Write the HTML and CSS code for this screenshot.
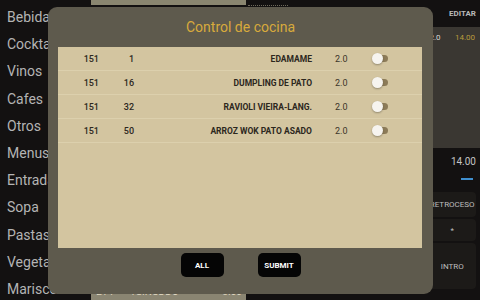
FILE: index.html
```html
<html>
<head>
    <link rel="stylesheet" href="styles.css">
</head>
<body>
    <div class="app">
        <nav class="categories">
            <div class="category">Bebidas</div>
            <div class="category">Cocktails</div>
            <div class="category">Vinos</div>
            <div class="category">Cafes</div>
            <div class="category">Otros</div>
            <div class="category">Menus</div>
            <div class="category">Entradas</div>
            <div class="category">Sopa</div>
            <div class="category">Pastas</div>
            <div class="category">Vegetales</div>
            <div class="category">Mariscos</div>
        </nav>

        <section class="ticket">
            <div class="ticket-head"></div>
            <div class="ticket-body"></div>
            <div class="ticket-line">
                <span class="qty">214</span>
                <span class="item">TSINGDDO</span>
                <span class="price">3.00</span>
            </div>
        </section>

        <section class="products">
            <div class="products-head"></div>
        </section>

        <aside class="keypad">
            <div class="keypad-top"><span class="edit">EDITAR</span></div>
            <div class="order">
                <div class="order-line"><span>2.0</span><span class="gold">14.00</span></div>
            </div>
            <div class="total">14.00</div>
            <div class="total-bar"></div>
            <div class="key">RETROCESO</div>
            <div class="key small">*</div>
            <div class="key tall">INTRO</div>
        </aside>
    </div>

    <div class="dialog">
        <div class="dialog-title">Control de cocina</div>
        <div class="dialog-list">
            <div class="row">
                <span class="num">151</span>
                <span class="num">1</span>
                <span class="name">EDAMAME</span>
                <span class="amount">2.0</span>
                <span class="switch"></span>
            </div>
            <div class="row">
                <span class="num">151</span>
                <span class="num">16</span>
                <span class="name">DUMPLING DE PATO</span>
                <span class="amount">2.0</span>
                <span class="switch"></span>
            </div>
            <div class="row">
                <span class="num">151</span>
                <span class="num">32</span>
                <span class="name">RAVIOLI VIEIRA-LANG.</span>
                <span class="amount">2.0</span>
                <span class="switch"></span>
            </div>
            <div class="row">
                <span class="num">151</span>
                <span class="num">50</span>
                <span class="name">ARROZ WOK PATO ASADO</span>
                <span class="amount">2.0</span>
                <span class="switch"></span>
            </div>
        </div>
        <div class="dialog-buttons">
            <button>ALL</button>
            <button>SUBMIT</button>
        </div>
    </div>
</body>
</html>
```

FILE: styles.css
```css
body {
    margin: 0;
    width: 480px;
    height: 300px;
    overflow: hidden;
    font-family: Roboto, "Liberation Sans", sans-serif;
    background-color: #131111;
}

.app {
    display: flex;
    height: 300px;
}

.categories {
    width: 92px;
    padding-top: 4px;
    box-sizing: border-box;
}

.category {
    height: 27.2px;
    line-height: 27.2px;
    padding-left: 7px;
    font-size: 14px;
    color: #b4b4b4;
    white-space: nowrap;
}

.ticket {
    width: 156px;
    display: flex;
    flex-direction: column;
}

.ticket-head {
    height: 5px;
    background-color: #8a8670;
}

.ticket-body {
    flex: 1;
}

.ticket-line {
    display: flex;
    height: 14px;
    padding: 1px 4px 0 5px;
    background-color: #8a8572;
    font-size: 10px;
    color: #e0d9c2;
}

.ticket-line .item {
    margin-left: 17px;
    flex: 1;
}

.products {
    width: 182px;
    margin-left: 2px;
}

.products-head {
    width: 40px;
    height: 5px;
    border-bottom: 1px dotted #6e6a5c;
}

.keypad {
    width: 48px;
    display: flex;
    flex-direction: column;
    padding-right: 4px;
}

.keypad-top {
    height: 27px;
    display: flex;
    align-items: center;
    justify-content: flex-end;
}

.edit {
    font-size: 8px;
    font-weight: bold;
    color: #b8b8b8;
}

.order {
    height: 121px;
    background-color: #3a3732;
    margin-right: -4px;
}

.order-line {
    display: flex;
    justify-content: space-between;
    padding: 6px 5px 0 1px;
    font-size: 8px;
    color: #d8d8d8;
}

.gold {
    color: #b89a3c;
}

.total {
    margin-top: 8px;
    text-align: right;
    font-size: 10px;
    color: #c4c4c4;
}

.total-bar {
    align-self: flex-end;
    width: 12px;
    height: 2px;
    margin: 11px 3px 0 0;
    background-color: #3f8fcf;
}

.key {
    height: 25px;
    margin-top: 12px;
    display: flex;
    align-items: center;
    justify-content: center;
    background-color: #1c1a18;
    border-radius: 4px;
    font-size: 8px;
    color: #bdbdbd;
}

.key.small {
    height: 22px;
    margin-top: 2px;
}

.key.tall {
    height: 46px;
    margin-top: 2px;
}

.dialog {
    position: fixed;
    left: 48px;
    top: 7px;
    width: 385px;
    height: 287px;
    display: flex;
    flex-direction: column;
    background-color: #5e5a4d;
    border-radius: 9px;
}

.dialog-title {
    height: 40px;
    line-height: 40px;
    text-align: center;
    font-size: 14px;
    color: #d8aa3c;
}

.dialog-list {
    height: 201px;
    margin: 0 11px 0 10px;
    background-color: #d3c5a0;
}

.row {
    display: grid;
    grid-template-columns: 41px 35px 178px 60px auto;
    align-items: center;
    height: 23px;
    border-bottom: 1px solid #dcd0ad;
    font-size: 9px;
    color: #2c271d;
}

.num {
    text-align: right;
    font-weight: 500;
}

.name {
    text-align: right;
    font-weight: bold;
    font-size: 8.5px;
}

.amount {
    padding-left: 23px;
    color: #3b352a;
}

.switch {
    position: relative;
    width: 17px;
    height: 11px;
}

.switch::before {
    content: "";
    position: absolute;
    left: 3px;
    top: 2px;
    width: 13px;
    height: 7px;
    border-radius: 4px;
    background-color: #8c7b58;
}

.switch::after {
    content: "";
    position: absolute;
    left: 0;
    top: 0;
    width: 11px;
    height: 11px;
    border-radius: 50%;
    background-color: #f6f4ef;
    box-shadow: 0 1px 2px rgba(0, 0, 0, 0.3);
}

.dialog-buttons {
    display: flex;
    justify-content: center;
    gap: 34px;
    padding-top: 5px;
}

.dialog-buttons button {
    width: 43px;
    height: 24px;
    padding: 0;
    border: none;
    border-radius: 5px;
    background-color: #050505;
    color: #ffffff;
    font-family: Roboto, "Liberation Sans", sans-serif;
    font-size: 8px;
    font-weight: bold;
}
```
